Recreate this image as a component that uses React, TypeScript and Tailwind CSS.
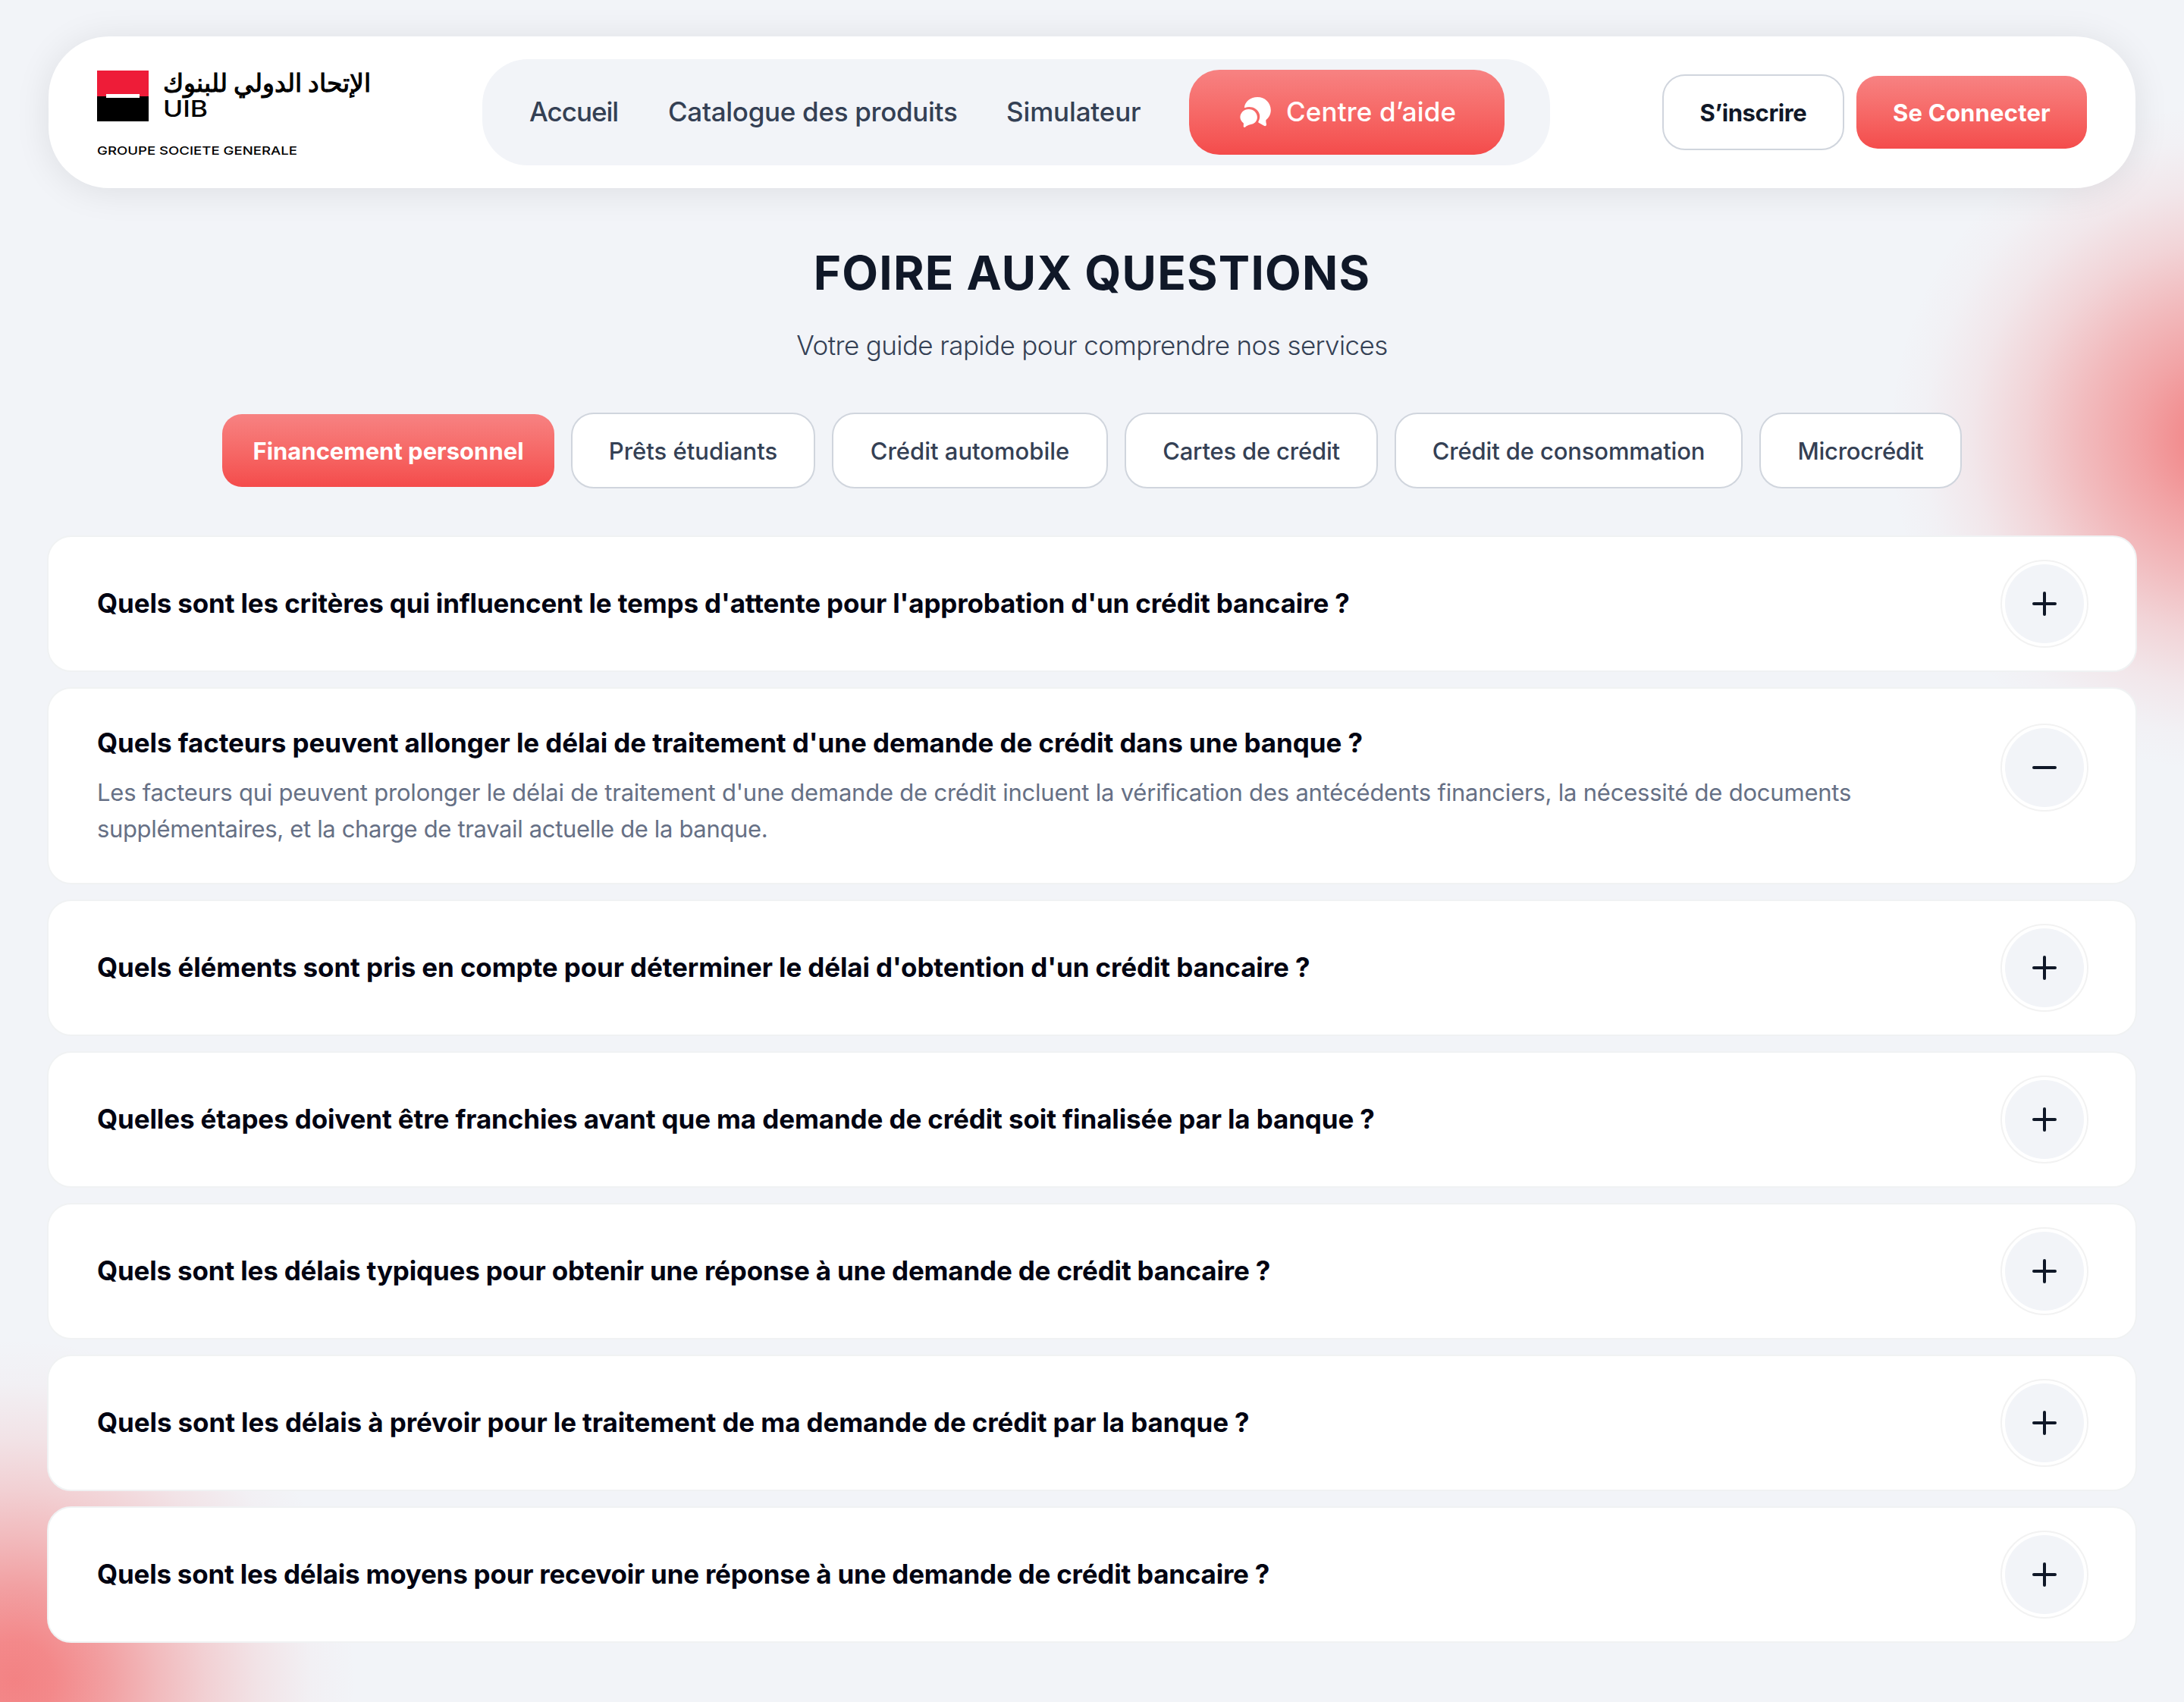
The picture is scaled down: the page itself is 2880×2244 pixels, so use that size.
import { useState } from 'react';

const navLinks = [
  { label: 'Accueil', cls: 'w-[119px] tracking-[-1px]' },
  { label: 'Catalogue des produits', cls: 'w-[382px] tracking-[-0.3px]' },
  { label: 'Simulateur', cls: 'w-[177px] tracking-[-0.15px]' },
];

const categories = [
  { label: 'Financement personnel', cls: 'w-[438px]' },
  { label: 'Prêts étudiants', cls: 'w-[322px]' },
  { label: 'Crédit automobile', cls: 'w-[364px]' },
  { label: 'Cartes de crédit', cls: 'w-[334px] tracking-[-0.2px]' },
  { label: 'Crédit de consommation', cls: 'w-[459px] tracking-[-0.15px]' },
  { label: 'Microcrédit', cls: 'w-[267px] tracking-[-0.3px]' },
];

const faqs = [
  {
    question: "Quels sont les critères qui influencent le temps d'attente pour l'approbation d'un crédit bancaire ?",
    cls: 'tracking-[-0.15px]',
  },
  {
    question: "Quels facteurs peuvent allonger le délai de traitement d'une demande de crédit dans une banque ?",
    cls: 'tracking-[-0.08px]',
    answer: [
      {
        line: "Les facteurs qui peuvent prolonger le délai de traitement d'une demande de crédit incluent la vérification des antécédents financiers, la nécessité de documents",
        cls: 'tracking-[-0.22px]',
      },
      {
        line: 'supplémentaires, et la charge de travail actuelle de la banque.',
        cls: 'tracking-[-0.35px]',
      },
    ],
  },
  {
    question: "Quels éléments sont pris en compte pour déterminer le délai d'obtention d'un crédit bancaire ?",
    cls: 'tracking-[-0.12px]',
  },
  {
    question: 'Quelles étapes doivent être franchies avant que ma demande de crédit soit finalisée par la banque ?',
    cls: 'tracking-[-0.12px]',
  },
  {
    question: 'Quels sont les délais typiques pour obtenir une réponse à une demande de crédit bancaire ?',
    cls: 'tracking-[-0.18px]',
  },
  {
    question: 'Quels sont les délais à prévoir pour le traitement de ma demande de crédit par la banque ?',
    cls: 'tracking-[-0.1px]',
  },
  {
    question: 'Quels sont les délais moyens pour recevoir une réponse à une demande de crédit bancaire ?',
    cls: 'tracking-[-0.23px]',
  },
];

function Logo() {
  return (
    <div className="w-[572px] h-full pt-[45px] pl-16">
      <div className="flex">
        <div className="w-[68px] h-[67px] bg-black">
          <div className="h-[34px] bg-[#ee1c38] flex items-end justify-center">
            <div className="w-11 h-[5px] bg-white translate-y-[2px]" />
          </div>
        </div>
        <div className="pl-[19px] text-black">
          <p dir="rtl" className="font-['Liberation_Serif',serif] font-bold text-[32.6px] leading-[34px] whitespace-nowrap">
            الإتحاد الدولي للبنوك
          </p>
          <p className="text-[30px] leading-[32px] font-medium origin-left scale-x-[1.18]">UIB</p>
        </div>
      </div>
      <p className="mt-[29px] text-[15px] leading-[20px] font-medium text-black whitespace-nowrap origin-left scale-x-[1.24]">
        GROUPE SOCIETE GENERALE
      </p>
    </div>
  );
}

function ChatIcon() {
  return (
    <svg width="42" height="40" viewBox="0 0 42 40" fill="white">
      <path d="M5.9 13.4C7.2 5.6 14 0 23.2 0C33 0 40.8 7.4 40.8 17.2C40.8 22.6 38.2 27.4 34.4 30.2C34.2 32.2 34.6 34 35 35.6C35.4 37.6 33.6 39 31.8 37.8L24.8 33.8C24 33.3 24.2 32.6 24.8 31.6C27.8 26 26.2 19 20.6 15.4C16.6 12.8 11.4 12.4 7 13.9C6.2 14.2 5.7 14.1 5.9 13.4Z" />
      <path d="M11.6 16C18 16 22.9 20.8 22.9 26.6C22.9 32 19 35.8 13.6 36.3C11.2 36.6 9 38 7.2 39.5C6 40.4 4.6 39.8 4.7 38.4C4.9 36.8 5.1 35.4 4.7 34.3C2.2 32.4 0.4 29.8 0.4 26.6C0.4 20.8 5.4 16 11.6 16Z" />
    </svg>
  );
}

function Header() {
  return (
    <header className="relative flex items-center h-[200px] rounded-[80px] bg-white shadow-[0_4px_48px_rgba(0,0,0,0.09)]">
      <Logo />
      <nav className="flex items-center w-[1408px] h-[140px] pl-[62px] rounded-[60px] bg-[#f2f4f8]">
        <div className="flex gap-16 pb-0.5 text-[35px] font-medium text-[#344054] whitespace-nowrap">
          {navLinks.map((l) => (
            <a key={l.label} href="#" className={l.cls}>{l.label}</a>
          ))}
        </div>
        <a href="#" className="ml-16 flex items-center w-[416px] h-28 pl-[67px] rounded-[40px] bg-linear-to-b from-[#f78282] to-[#f44b4b] text-white text-[35px] font-medium">
          <ChatIcon />
          <span className="ml-[19px] pb-0.5 tracking-[0.15px] whitespace-nowrap">Centre d’aide</span>
        </a>
      </nav>
      <div className="ml-[148px] flex items-center gap-4 text-[31px] font-bold whitespace-nowrap">
        <button className="w-60 h-[100px] pt-0.5 rounded-[30px] border-2 border-[#d0d5dd] text-[#101828] tracking-[-0.4px]">
          S’inscrire
        </button>
        <button className="w-[304px] h-24 pt-0.5 rounded-[28px] bg-linear-to-b from-[#f78282] to-[#f44b4b] text-white tracking-[0.2px]">
          Se Connecter
        </button>
      </div>
    </header>
  );
}

function ToggleButton({ open, onClick }: { open: boolean; onClick: () => void }) {
  return (
    <button
      onClick={onClick}
      className="shrink-0 flex items-center justify-center w-[116px] h-[116px] rounded-full border-2 border-[#f2f2f2] bg-white"
    >
      <span className="flex items-center justify-center w-[104px] h-[104px] rounded-full bg-[#f2f4f8]">
        <svg width="32" height="32" viewBox="0 0 32 32" stroke="#101828" strokeWidth="4" strokeLinecap="round">
          <path d="M2 16H30" />
          {!open && <path d="M16 2V30" />}
        </svg>
      </span>
    </button>
  );
}

export default function App() {
  const [active, setActive] = useState(0);
  const [opened, setOpened] = useState(1);

  return (
    <div className="relative w-[2880px] h-[2244px] overflow-hidden bg-[#f2f4f8] font-['Inter',sans-serif]">
      {/* soft red glows behind the content */}
      <div className="absolute left-[2490px] top-[138px] w-[880px] h-[880px] bg-[radial-gradient(circle_closest-side,rgba(242,76,76,0.68)_0%,rgba(242,76,76,0.61)_11.4%,rgba(242,76,76,0.48)_25.5%,rgba(242,76,76,0.34)_42%,rgba(242,76,76,0.19)_59%,rgba(242,76,76,0.08)_75%,rgba(242,76,76,0.02)_89%,rgba(242,76,76,0)_100%)]" />
      <div className="absolute -left-[430px] top-[1765px] w-[900px] h-[900px] bg-[radial-gradient(circle_closest-side,rgba(244,76,76,0.68)_0%,rgba(244,76,76,0.64)_11.4%,rgba(242,76,76,0.5)_27%,rgba(242,76,76,0.34)_42%,rgba(242,76,76,0.21)_56%,rgba(242,76,76,0.1)_71%,rgba(242,76,76,0.025)_87%,rgba(242,76,76,0)_100%)]" />

      <div className="relative px-16 pt-12">
        <Header />

        <section className="text-center">
          <h1 className="mt-[72px] text-[62px] leading-[80px] font-bold tracking-[1.2px] text-[#101828]">
            FOIRE AUX QUESTIONS
          </h1>
          <p className="mt-[27px] text-[35px] leading-[56px] font-light tracking-[-0.6px] text-[#344054]">
            Votre guide rapide pour comprendre nos services
          </p>
        </section>

        <div className="mt-[61px] flex items-center justify-center gap-[22px] h-[100px] text-[31px] whitespace-nowrap">
          {categories.map((c, i) => (
            <button
              key={c.label}
              onClick={() => setActive(i)}
              className={`pt-0.5 ${c.cls} ${
                i === active
                  ? 'h-24 rounded-[26px] bg-linear-to-b from-[#f78282] to-[#f44b4b] text-white font-bold'
                  : 'h-[100px] rounded-[30px] border-2 border-[#d0d5dd] bg-white text-[#344054] font-medium'
              }`}
            >
              {c.label}
            </button>
          ))}
        </div>

        <div className="mt-[62px] -mx-0.5 flex flex-col gap-5">
          {faqs.map((f, i) => {
            const open = i === opened && !!f.answer;
            return (
              <div
                key={f.question}
                className={`flex justify-between rounded-[32px] border-2 border-[#f0f2f3] bg-white pl-16 pr-[62px] ${
                  open ? 'h-[260px] items-start pt-[46px]' : 'h-[180px] items-center'
                }`}
              >
                <div className={open ? '-mt-px' : 'pb-0.5'}>
                  <h2 className={`text-[35px] leading-[52px] font-bold text-[#020412] whitespace-nowrap ${f.cls}`}>
                    {f.question}
                  </h2>
                  {open && (
                    <p className="mt-4 text-[31px] leading-[48px] text-[#667085] whitespace-nowrap">
                      {f.answer?.map((a) => (
                        <span key={a.line} className={`block ${a.cls}`}>{a.line}</span>
                      ))}
                    </p>
                  )}
                </div>
                <ToggleButton open={open} onClick={() => setOpened(open ? -1 : i)} />
              </div>
            );
          })}
        </div>
      </div>
    </div>
  );
}
